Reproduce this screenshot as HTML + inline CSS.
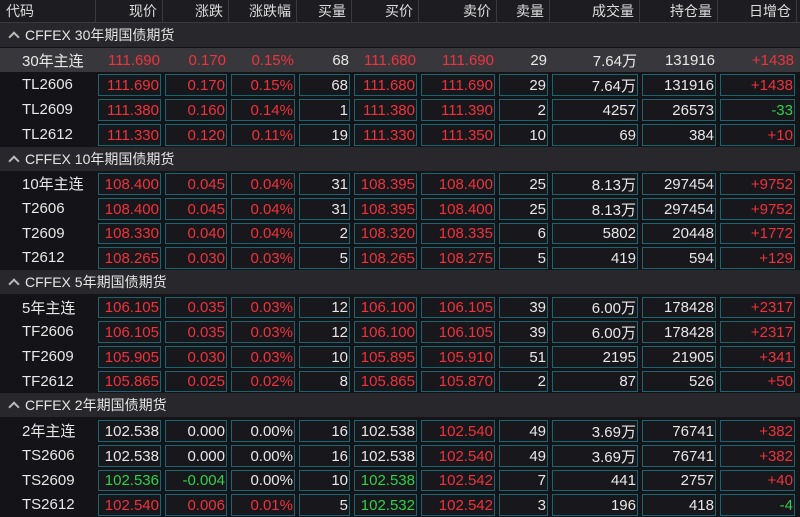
<!DOCTYPE html>
<html><head><meta charset="utf-8"><style>
*{margin:0;padding:0;box-sizing:border-box}
body{width:800px;height:517px;overflow:hidden;background:#131318;font-family:"Liberation Sans","Noto Sans CJK SC",sans-serif;color:#e8e8e8}
.row{position:absolute;left:0;width:800px;height:25px}
.c{position:absolute;top:0;height:100%;text-align:right;white-space:nowrap}
.hdr{top:0;height:23px;background:#1d1d21;border-bottom:1px solid #3a3a3e;font-size:14px;color:#ddd}
.hdr .c{line-height:22px;padding-right:5px;border-right:1px solid #3a3a3e}
.grp{background:#28282c;font-size:14px;line-height:24px;padding-left:8px;color:#e6e6e6}
.grp .ar{display:inline-block;width:8px;height:8px;border-left:2px solid #bbb;border-top:2px solid #bbb;transform:rotate(45deg);margin:0 7px 0 2px;position:relative;top:1px}
.d{font-size:15px}
.d .c .b{position:absolute;left:2px;right:2px;top:2px;bottom:1px;border:1px solid #1b6570;background:#17171c;padding-right:1px;display:flex;align-items:center;justify-content:flex-end}
.d .n{padding-left:22px;display:flex;align-items:center;justify-content:flex-start}
.hl{background:#38383c}
.hl .c .b{border:none;background:transparent}
.r{color:#f0323c}.g{color:#2ed24a}
</style></head><body>
<div id="w"></div>
<script>
var X=[0,96,163,229,297,352,419,497,550,640,718,797];
var H=["代码","现价","涨跌","涨跌幅","买量","买价","卖价","卖量","成交量","持仓量","日增仓"];
var h='<div class="row hdr">';
for(var i=0;i<11;i++)h+='<div class="c" style="left:'+X[i]+'px;width:'+(X[i+1]-X[i])+'px;'+(i==0?'text-align:left;padding-left:6px':'')+'">'+H[i]+'</div>';
h+='</div>';
var G=[["CFFEX 30年期国债期货",[
["30年主连","r111.690","r0.170","r0.15%","68","r111.680","r111.690","29","7.64万","131916","r+1438"],
["TL2606","r111.690","r0.170","r0.15%","68","r111.680","r111.690","29","7.64万","131916","r+1438"],
["TL2609","r111.380","r0.160","r0.14%","1","r111.380","r111.390","2","4257","26573","g-33"],
["TL2612","r111.330","r0.120","r0.11%","19","r111.330","r111.350","10","69","384","r+10"]]],
["CFFEX 10年期国债期货",[
["10年主连","r108.400","r0.045","r0.04%","31","r108.395","r108.400","25","8.13万","297454","r+9752"],
["T2606","r108.400","r0.045","r0.04%","31","r108.395","r108.400","25","8.13万","297454","r+9752"],
["T2609","r108.330","r0.040","r0.04%","2","r108.320","r108.335","6","5802","20448","r+1772"],
["T2612","r108.265","r0.030","r0.03%","5","r108.265","r108.275","5","419","594","r+129"]]],
["CFFEX 5年期国债期货",[
["5年主连","r106.105","r0.035","r0.03%","12","r106.100","r106.105","39","6.00万","178428","r+2317"],
["TF2606","r106.105","r0.035","r0.03%","12","r106.100","r106.105","39","6.00万","178428","r+2317"],
["TF2609","r105.905","r0.030","r0.03%","10","r105.895","r105.910","51","2195","21905","r+341"],
["TF2612","r105.865","r0.025","r0.02%","8","r105.865","r105.870","2","87","526","r+50"]]],
["CFFEX 2年期国债期货",[
["2年主连","102.538","0.000","0.00%","16","102.538","r102.540","49","3.69万","76741","r+382"],
["TS2606","102.538","0.000","0.00%","16","102.538","r102.540","49","3.69万","76741","r+382"],
["TS2609","g102.536","g-0.004","0.00%","10","g102.538","r102.542","7","441","2757","r+40"],
["TS2612","r102.540","r0.006","r0.01%","5","g102.532","r102.542","3","196","418","g-4"]]]];
var y=23,P=24.7;
G.forEach(function(g,gi){
 h+='<div class="row grp" style="top:'+Math.round(y)+'px;height:24px"><span class="ar"></span>'+g[0]+'</div>';y+=P;
 g[1].forEach(function(r,ri){
  h+='<div class="row d'+(gi==0&&ri==0?' hl':'')+'" style="top:'+Math.round(y)+'px;height:'+(Math.round(y+P)-Math.round(y))+'px">';
  h+='<div class="c n" style="left:0;width:96px">'+r[0]+'</div>';
  for(var i=1;i<11;i++){var v=r[i],cl='';if(v[0]=='r'||v[0]=='g'){cl=v[0];v=v.slice(1);}
   h+='<div class="c '+cl+'" style="left:'+X[i]+'px;width:'+(X[i+1]-X[i])+'px"><div class="b">'+v+'</div></div>';}
  h+='</div>';y+=P;});
});
document.getElementById('w').innerHTML=h;
</script>
</body></html>
